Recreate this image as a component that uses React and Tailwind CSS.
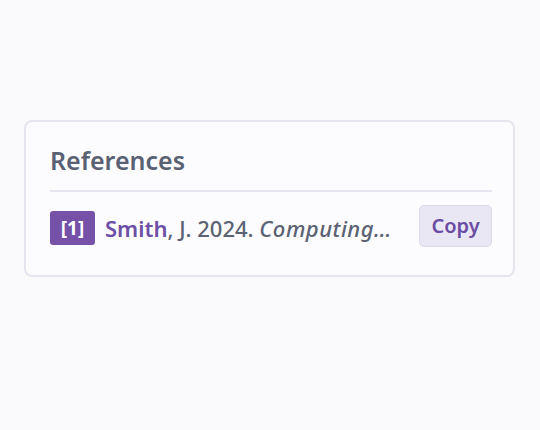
export default function App() {
  return (
    <div className="w-[540px] h-[430px] bg-[#fafafd] pt-[120px] px-[24px]" style={{ fontFamily: '"Noto Sans", sans-serif' }}>
      <div className="w-[491px] h-[157px] rounded-[8px] border-2 border-[#e6e4ef] bg-[#fcfcfe] pl-[24px] pr-[21px] pt-[22px]">
        <h2 className="text-[25px] leading-[32px] font-semibold text-[#596172] pb-[14px] border-b-2 border-[#e6e4ee]">References</h2>
        <div className="flex items-center gap-[16px] mt-[13px]">
          <div className="flex-1 min-w-0 flex items-center gap-[10px] pt-[4px]">
            <span className="shrink-0 h-[34px] w-[45px] justify-center flex items-center rounded-[3px] bg-[#7651a8] text-white text-[19px] font-bold">[1]</span>
            <span className="truncate text-[22px] font-medium text-[#5a6273]">
              <span className="text-[#6e4fa6] font-semibold">Smith</span>, J. 2024. <i className="font-medium tracking-[0.5px]">Computing…</i>
            </span>
          </div>
          <button className="shrink-0 w-[73px] h-[42px] rounded-[5px] border border-[#dcd9ea] bg-[#e9e7f4] text-[#6a4ca3] text-[20px] font-semibold">Copy</button>
        </div>
      </div>
    </div>
  );
}
